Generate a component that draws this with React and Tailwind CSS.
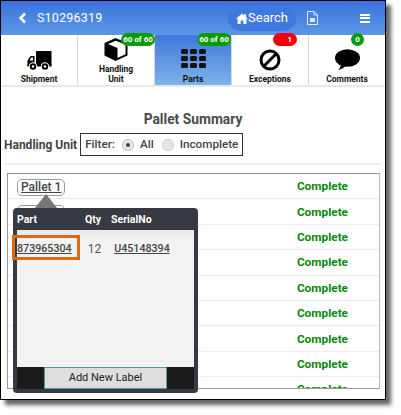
const rows = ["Pallet 1", "Pallet 2", "", "", "", "", "", "", ""];

function Truck() {
  return (
    <svg width="25" height="20" viewBox="0 0 25 20" fill="#000">
      <rect x="9" y="0" width="15.500" height="14.500" rx="0.500" />
      <path d="M7.500 5H3.500L0.500 9.500v5.500h7z" />
      <rect x="0.500" y="13" width="24" height="2.500" />
      <path d="M2.500 9.500l1.800-3H6v3z" fill="#fff" />
      <circle cx="6" cy="15.500" r="4.200" fill="#fff" />
      <circle cx="6" cy="15.500" r="3.200" />
      <circle cx="6" cy="15.500" r="1.200" fill="#fff" />
      <circle cx="18" cy="15.500" r="4.200" fill="#fff" />
      <circle cx="18" cy="15.500" r="3.200" />
      <circle cx="18" cy="15.500" r="1.200" fill="#fff" />
    </svg>
  );
}

function Cube() {
  return (
    <svg width="24" height="23" viewBox="0 0 24 23">
      <path d="M11.500 0L23.500 5V17.500L11.500 23L0.500 17.500V5z" fill="#000" />
      <path d="M11.800 2.800L21.500 6.500V16.300L13.500 20V10L4 6z" fill="#fff" />
    </svg>
  );
}

function PartsGrid() {
  const cells = [0, 1, 2, 3, 4, 5, 6, 7, 8];
  return (
    <div className="mb-[3px] grid grid-cols-3 gap-x-[2px] gap-y-[2px]">
      {cells.map((c) => (
        <div key={c} className="w-[7px] h-[5px] rounded-[1.500px] bg-[#111]" />
      ))}
    </div>
  );
}

function Ban() {
  return (
    <svg width="22" height="22" viewBox="0 0 22 22" fill="none" stroke="#000" strokeWidth="3">
      <circle cx="11" cy="11" r="9" />
      <path d="M5 17L17 5" />
    </svg>
  );
}

function Bubble() {
  return (
    <svg width="26" height="22" viewBox="0 0 26 22" fill="#000">
      <ellipse cx="13.500" cy="9" rx="12.500" ry="8.800" />
      <path d="M7 14c0 3-1 5-2.500 7 3-.5 6-2.500 8-5z" />
    </svg>
  );
}

function Badge({ children, className }) {
  return (
    <div className={`absolute top-[-2px] h-[13px] rounded-full flex items-center text-white text-[8px] font-bold leading-none ${className}`}>
      {children}
    </div>
  );
}

function Tab({ label, icon, active, badge, last }) {
  return (
    <div
      className={`relative flex-1 flex flex-col items-center justify-end pb-[1px] text-[8.500px] leading-[10px] font-bold text-center ${
        active ? "bg-gradient-to-b from-[#3f77dd] to-[#7fb2e8]" : "bg-white"
      } ${last ? "" : "border-r border-[#d8d8d8]"} text-[#111]`}
    >
      {badge}
      <div className="flex items-center justify-center mb-[3px]">{icon}</div>
      {label}
    </div>
  );
}

export default function App() {
  return (
    <div className="w-[401px] h-[415px] bg-white font-['Roboto',sans-serif] overflow-hidden">
      <div className="relative w-[386px] h-[400px] bg-white border border-black shadow-[5px_5px_4px_#666] flex flex-col">
        {/* header */}
        <div className="h-[34px] flex items-center bg-gradient-to-b from-[#3a73dd] to-[#5b97e6] text-white">
          <svg className="ml-[17px]" width="9" height="12" viewBox="0 0 9 12" fill="none" stroke="#fff" strokeWidth="2.600">
            <path d="M7 1.500L2.500 6L7 10.500" />
          </svg>
          <span className="ml-[10px] text-[12.500px] tracking-[0.2px]">S10296319</span>
          <div className="ml-auto w-[68px] h-[25px] rounded-full bg-[#3f78de] flex items-center justify-center text-[13px]">
            <svg width="12" height="11" viewBox="0 0 12 11" fill="#fff">
              <path d="M6 0.500L0 5.800h1.600V11h3.100V7.500h2.600V11h3.100V5.800H12L10 4V1H8.500v1.600z" />
            </svg>
            <span>Search</span>
          </div>
          <svg className="ml-[11px]" width="11" height="14" viewBox="0 0 11 14" fill="none" stroke="#dfeafb" strokeWidth="1">
            <path d="M0.500 0.500H7L10.500 4V13.500H0.500z" />
            <path d="M7 0.500V4H10.500" />
            <rect x="3" y="7" width="5" height="4" fill="#dfeafb" stroke="none" />
          </svg>
          <div className="ml-[42px] mr-[15px] flex flex-col gap-[1.500px]">
            <div className="w-[10px] h-[2px] bg-white" />
            <div className="w-[10px] h-[2px] bg-white" />
            <div className="w-[10px] h-[2px] bg-white" />
          </div>
        </div>
        {/* tabs */}
        <div className="h-[52px] flex border-b-2 border-[#e8e8e8]">
          <Tab label="Shipment" icon={<Truck />} />
          <Tab
            label={<>Handling<br />Unit</>}
            icon={<Cube />}
            badge={<Badge className="right-[-1px] w-[34px] justify-center bg-[#0a9a0a]">60 of 60</Badge>}
          />
          <Tab
            label="Parts"
            active
            icon={<PartsGrid />}
            badge={<Badge className="right-[0px] w-[34px] justify-center bg-[#0a9a0a]">60 of 60</Badge>}
          />
          <Tab
            label="Exceptions"
            icon={<Ban />}
            badge={<Badge className="left-[41px] w-[24px] justify-end pr-[5px] bg-[#f5000a]">1</Badge>}
          />
          <Tab
            label="Comments"
            last
            icon={<Bubble />}
            badge={<Badge className="left-[42px] w-[13px] justify-center bg-[#0a9a0a]">0</Badge>}
          />
        </div>

        {/* summary */}
        <div className="mt-[23px] text-center text-[13.800px] leading-[18px] font-bold text-[#4a4a4a]">Pallet Summary</div>
        <div className="mt-[5px] ml-[3px] flex items-center text-[11.700px] font-medium text-[#444]">
          <span className="font-bold text-[12px]">Handling Unit</span>
          <div className="ml-[3px] h-[23px] flex items-center border border-[#333] px-[4px]">
            <span>Filter:</span>
            <span className="ml-[7px] w-[12px] h-[12px] rounded-full border border-[#bbb] bg-[#e6e6e6] flex items-center justify-center">
              <span className="w-[4px] h-[4px] rounded-full bg-[#444]" />
            </span>
            <span className="ml-[6px]">All</span>
            <span className="ml-[8px] w-[12px] h-[12px] rounded-full border border-[#ccc] bg-[#e6e6e6]" />
            <span className="ml-[6px]">Incomplete</span>
          </div>
        </div>
        <div className="mt-[7px] mx-[4px] h-[2px] bg-[#eeeeee]" />

        {/* table */}
        <div className="mt-[8px] ml-[6px] w-[373px] h-[216px] overflow-hidden border border-[#999] border-r-[#bbb]">
          {rows.map((r, i) => (
            <div key={i} className="h-[25.400px] flex items-center justify-between border-b border-[#ececec] shrink-0">
              <div className="pl-[9px]">
                {r && (
                  <span className="inline-block h-[17px] px-[3px] rounded-[5px] border border-[#999] text-[12px] leading-[15px] font-medium text-[#444] underline">
                    {r}
                  </span>
                )}
              </div>
              <span className="mr-[31px] text-[11.800px] leading-[14px] font-bold text-[#0a870a]">Complete</span>
            </div>
          ))}
        </div>

        {/* popup */}
        <div className="absolute left-[34px] top-[193px] w-0 h-0 border-x-[11px] border-x-transparent border-b-[14px] border-b-[#777]" />
        <div className="absolute left-[12px] top-[207px] w-[185px] h-[185px] rounded-[4px] bg-[#373a42] px-[4px] pb-[4px] flex flex-col">
          <div className="h-[22px] pt-[1px] flex items-center text-[10.500px] font-bold text-white">
            <span>Part</span>
            <span className="ml-[48px]">Qty</span>
            <span className="ml-[10px]">SerialNo</span>
          </div>
          <div className="flex-1 bg-[#f2f2f2] border-t-[6px] border-[#ececec]">
            <div className="mt-[4px] flex items-center text-[10.700px] text-[#444]">
              <span className="underline font-medium">873965304</span>
              <span className="ml-[16px] text-[12px] text-[#555]">12</span>
              <span className="ml-[13px] underline font-medium">U45148394</span>
            </div>
          </div>
          <div className="h-[22px] bg-[#1b1b1b] flex pl-[27px]">
            <div className="w-[123px] h-full bg-[#dedede] border border-[#4f9c9c] rounded-[1px] flex items-center justify-center text-[11px] text-[#222]">
              Add New Label
            </div>
          </div>
        </div>
        <div className="absolute left-[11px] top-[234px] w-[68px] h-[25px] border-[3px] border-[#e06a10]" />
      </div>
    </div>
  );
}
